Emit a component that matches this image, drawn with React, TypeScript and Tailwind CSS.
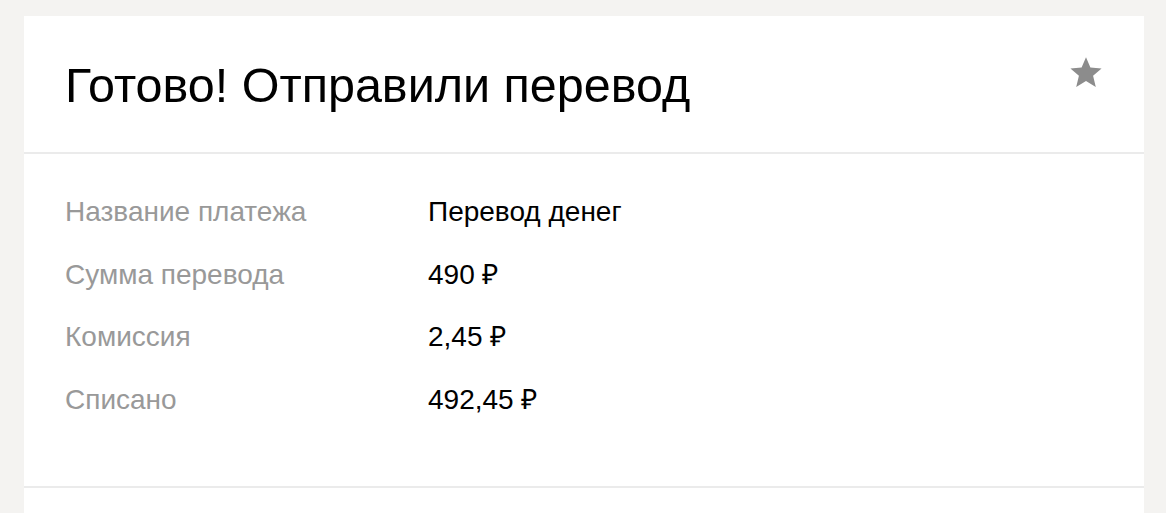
const rows = [
  { label: "Название платежа", value: "Перевод денег" },
  { label: "Сумма перевода", value: "490 ₽" },
  { label: "Комиссия", value: "2,45 ₽" },
  { label: "Списано", value: "492,45 ₽" },
];

export default function App() {
  return (
    <div className="min-h-[513px] bg-[#f4f3f1] pl-6 pr-[22px] pt-4 font-['Liberation_Sans',sans-serif]">
      <div className="bg-white">
        <div className="flex items-start justify-between border-b-2 border-[#ebebeb] pl-[41px] pr-[41px] pt-[41px] h-[138px]">
          <h1 className="text-[48.5px] leading-[56px] text-black">Готово! Отправили перевод</h1>
          <svg width="34" height="34" viewBox="0 0 24 24" className="mt-[-2px] text-[#8c8c8c]">
            <path
              fill="currentColor"
              d="M12 1.5l3.1 7.4 7.9.6-6 5.2 1.9 7.8L12 18.3l-6.9 4.2 1.9-7.8-6-5.2 7.9-.6z"
            />
          </svg>
        </div>
        <div className="border-b-2 border-[#ebebeb] pl-[41px] pt-[38px] h-[334px]">
          {rows.map((r) => (
            <div key={r.label} className="flex h-[62.5px] text-[28px] leading-[40px]">
              <div className="w-[363px] text-[#999999]">{r.label}</div>
              <div className="text-black">{r.value}</div>
            </div>
          ))}
        </div>
        <div className="h-[25px]" />
      </div>
    </div>
  );
}
